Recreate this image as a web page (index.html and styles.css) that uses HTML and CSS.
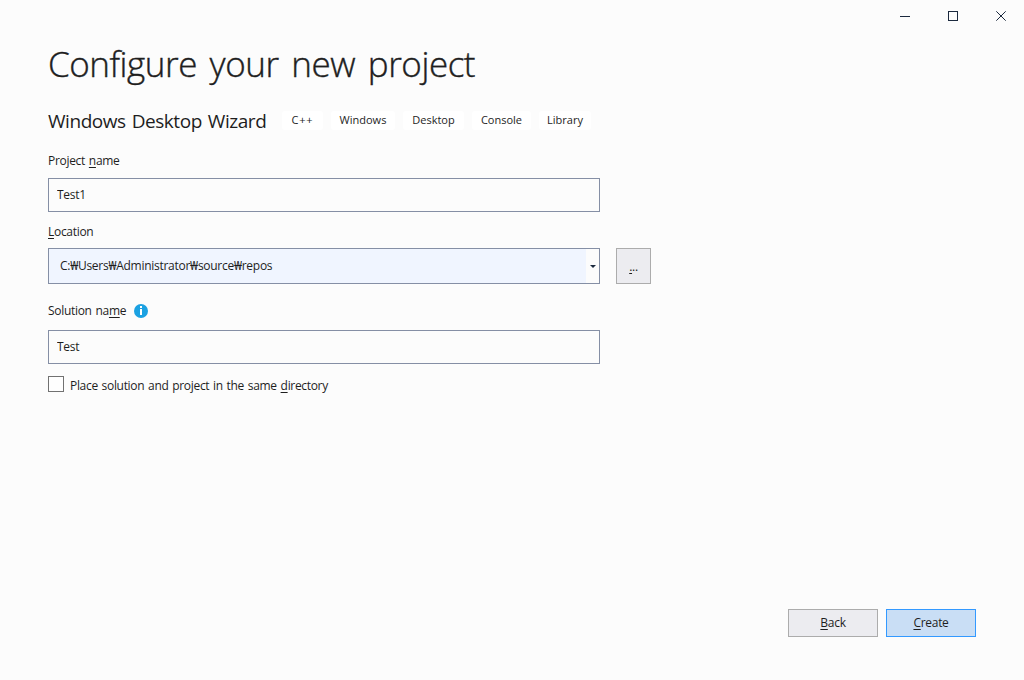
FILE: index.html
```html
<!DOCTYPE html>
<html lang="en">
<head>
  <meta charset="UTF-8">
  <meta name="viewport" content="width=device-width, initial-scale=1.0">
  <title>Configure your new project</title>
  <link rel="stylesheet" href="styles.css">
</head>
<body>
  <div class="window">
    <div class="title-bar">
      <button class="caption-button" aria-label="Minimize">
        <svg width="11" height="11" shape-rendering="crispEdges"><path d="M0 5.5h10" /></svg>
      </button>
      <button class="caption-button" aria-label="Maximize">
        <svg width="11" height="11" shape-rendering="crispEdges"><path d="M0.5 0.5h9v9h-9z" /></svg>
      </button>
      <button class="caption-button" aria-label="Close">
        <svg width="11" height="11"><path d="M0.3 0.3l9.4 9.4M9.7 0.3l-9.4 9.4" /></svg>
      </button>
    </div>

    <main class="content">
      <h1>Configure your new project</h1>

      <div class="template">
        <h2>Windows Desktop Wizard</h2>
        <ul class="tags">
          <li class="tag-cpp">C++</li>
          <li class="tag-windows">Windows</li>
          <li class="tag-desktop">Desktop</li>
          <li class="tag-console">Console</li>
          <li class="tag-library">Library</li>
        </ul>
      </div>

      <label class="label" for="projectName"><span>Project <u>n</u>ame</span></label>
      <input class="text-box" type="text" id="projectName" value="Test1">

      <label class="label label-location" for="location"><span><u>L</u>ocation</span></label>
      <div class="location-row">
        <div class="combo">
          <input class="combo-text" type="text" id="location" value="C:₩Users₩Administrator₩source₩repos">
          <span class="combo-arrow"><svg width="6" height="3"><path d="M0 0h6l-3 3z" /></svg></span>
        </div>
        <button class="browse"><u>.</u>..</button>
      </div>

      <label class="label label-solution" for="solutionName">
        <span>Solution na<u>m</u>e</span>
        <svg class="info" width="14" height="14" viewBox="0 0 14 14">
          <circle cx="7" cy="7" r="7" />
          <path d="M6 2h2v2H6zM6 5h2v6H6z" />
        </svg>
      </label>
      <input class="text-box" type="text" id="solutionName" value="Test">

      <label class="check-row">
        <input type="checkbox">
        <span>Place solution and project in the same <u>d</u>irectory</span>
      </label>
    </main>

    <footer class="actions">
      <button class="button">
        <span><u>B</u>ack</span>
      </button>
      <button class="button primary">
        <span><u>C</u>reate</span>
      </button>
    </footer>
  </div>
</body>
</html>
```
FILE: styles.css
```css
* {
  box-sizing: border-box;
}

body {
  margin: 0;
  background: #fcfcfc;
  color: #1e1e1e;
  font-family: "Open Sans", "Noto Sans", sans-serif;
  font-size: 12px;
  line-height: 16px;
}

button,
input {
  margin: 0;
  padding: 0;
  border: none;
  border-radius: 0;
  color: inherit;
  font: inherit;
  letter-spacing: inherit;
  outline: none;
}

u {
  text-decoration: underline;
  text-decoration-thickness: 1px;
  text-underline-offset: 2px;
  text-decoration-skip-ink: none;
}

.window {
  display: flex;
  flex-direction: column;
  height: 100vh;
  letter-spacing: -0.3px;
  word-spacing: 1px;
}

.title-bar {
  display: flex;
  justify-content: flex-end;
  height: 32px;
}

.caption-button {
  width: 48px;
  padding: 3px 0 0 3px;
  background: none;
}

.caption-button svg {
  fill: none;
  stroke: #1b293e;
}

.content {
  flex: 1;
  padding: 8px 48px 0;
}

h1 {
  margin: 0;
  font-size: 35px;
  font-weight: 300;
  line-height: 48px;
  letter-spacing: -0.45px;
  word-spacing: 4px;
  -webkit-text-stroke: 0.4px #1e1e1e;
}

.template {
  display: flex;
  align-items: center;
  height: 28px;
  margin-top: 19px;
}

h2 {
  width: 234px;
  margin: 0;
  font-size: 19px;
  font-weight: 400;
  line-height: 28px;
  letter-spacing: -0.45px;
  word-spacing: 1.5px;
  white-space: nowrap;
}

.tags {
  display: flex;
  gap: 8px;
  margin: 0 0 1px;
  padding: 0;
  list-style: none;
}

.tags li {
  height: 19px;
  border-radius: 3px;
  background: #fff;
  font-size: 11px;
  line-height: 18px;
  letter-spacing: 0;
  text-align: center;
}

.tags .tag-cpp {
  width: 41px;
  letter-spacing: 0.8px;
}

.tag-windows { width: 64px; }
.tag-desktop { width: 61px; }
.tag-console { width: 59px; }
.tag-library { width: 52px; }

.label {
  display: flex;
  align-items: center;
  height: 16px;
  margin: 18px 0 9px;
}

.label-location {
  margin: 12px 0 8px;
}

.label-solution {
  gap: 8px;
  margin: 19px 0 11px;
}

.text-box {
  display: block;
  width: 552px;
  height: 34px;
  padding: 0 8px 2px;
  border: 1px solid #858fa5;
  background: #fcfcfc;
}

.location-row {
  display: flex;
  gap: 16px;
}

.combo {
  display: flex;
  width: 552px;
  height: 36px;
  border: 1px solid #858fa5;
}

.combo-text {
  flex: 1;
  padding: 0 11px;
  background: #f0f5ff;
  letter-spacing: -0.27px;
}

.combo-arrow {
  display: flex;
  align-items: center;
  justify-content: center;
  width: 13px;
  padding-top: 1px;
}

.combo-arrow svg {
  fill: #1b293e;
}

.browse {
  width: 35px;
  height: 36px;
  padding-top: 2px;
  border: 1px solid #acacac;
  background: #ececf0;
}

.info {
  fill: #1ba1e2;
}

.info path {
  fill: #fff;
}

.check-row {
  display: flex;
  gap: 6px;
  width: max-content;
  margin-top: 12px;
}

.check-row span {
  padding-top: 2px;
  letter-spacing: -0.32px;
}

input[type="checkbox"] {
  width: 16px;
  height: 16px;
  border: 1px solid #717171;
  background: #fefefe;
  appearance: none;
}

.actions {
  display: flex;
  justify-content: flex-end;
  gap: 8px;
  padding: 0 48px 43px;
}

.button {
  width: 90px;
  height: 28px;
  border: 1px solid #acacac;
  background: #ececf0;
}

.button.primary {
  border-color: #3399ff;
  background: #c9def5;
}
```
